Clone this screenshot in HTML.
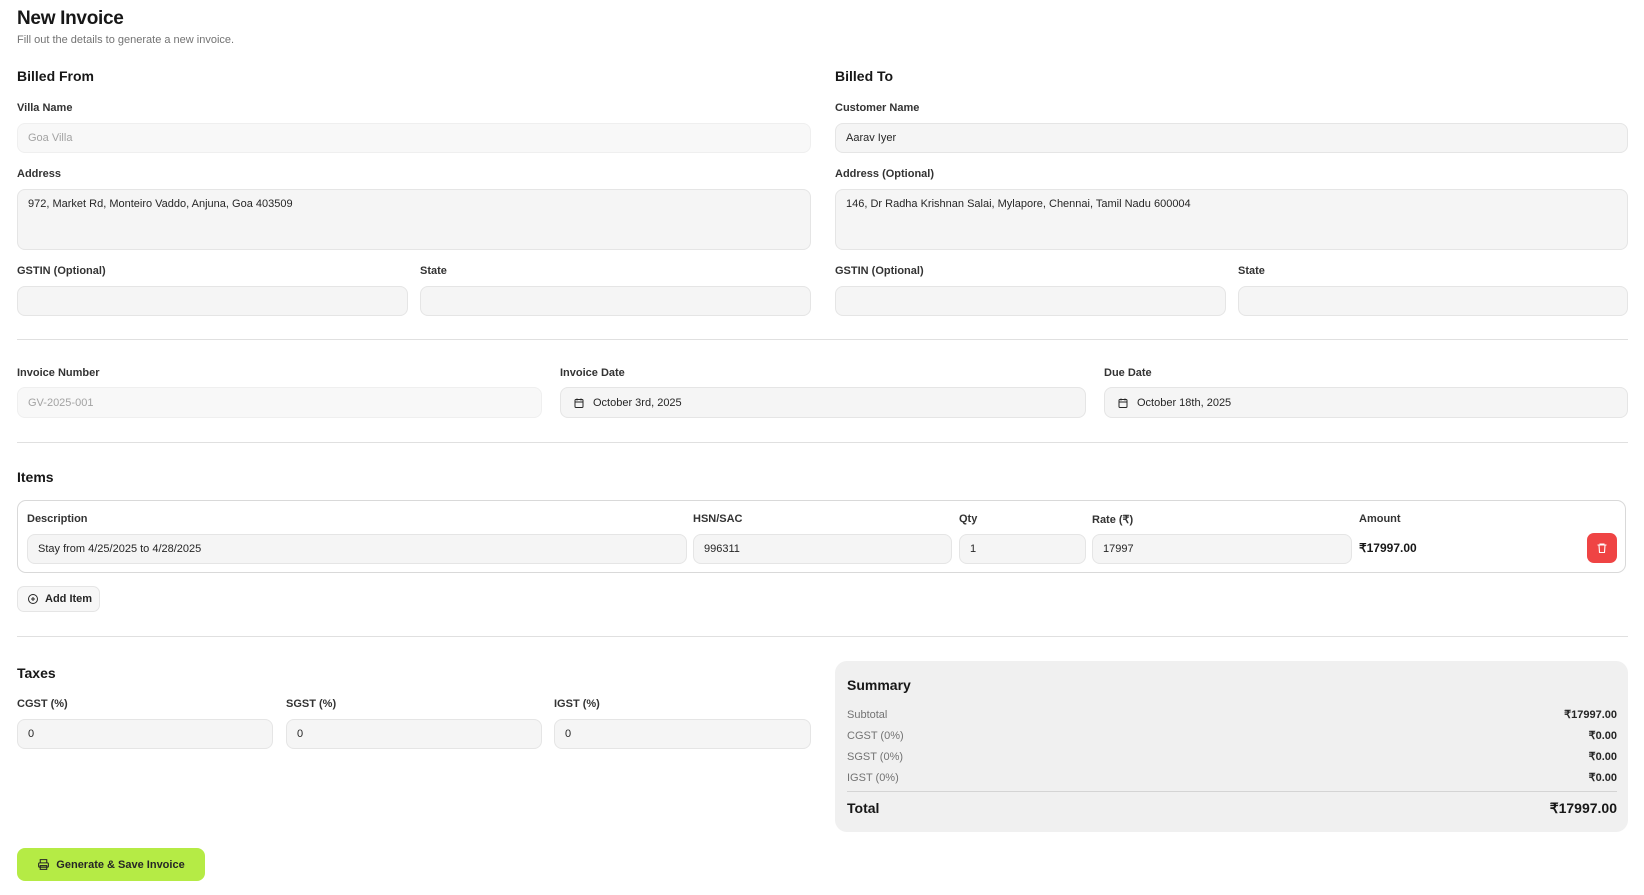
<!DOCTYPE html>
<html><head><meta charset="utf-8"><style>
*{box-sizing:border-box;margin:0;padding:0}
body{width:1644px;height:895px;background:#fff;font-family:"Liberation Sans",sans-serif;color:#171717;position:relative;overflow:hidden}
.a{position:absolute}
.h1{font-size:19px;font-weight:700;letter-spacing:-0.3px}
.sub{font-size:11px;color:#737373}
.h2{font-size:14px;font-weight:700}
.lbl{font-size:11px;font-weight:700;color:#333}
.in{position:absolute;background:#f5f5f5;border:1px solid #e5e5e5;border-radius:8px;font-size:11px;padding-left:10px;display:flex;align-items:center;color:#262626}
.ph{color:#a3a3a3;background:#f8f8f8;border-color:#efefef}
.ta{align-items:flex-start;padding-top:8px}
.hr{position:absolute;left:17px;width:1611px;height:1px;background:#e0e0e0}
.row{position:absolute;left:847px;width:770px;font-size:11px;color:#737373;display:flex;justify-content:space-between;align-items:baseline}
.row b{color:#262626;font-weight:700}
</style></head><body>
<div class="a h1" style="left:17px;top:8px">New Invoice</div>
<div class="a sub" style="left:17px;top:34px">Fill out the details to generate a new invoice.</div>

<div class="a h2" style="left:17px;top:68px">Billed From</div>
<div class="a h2" style="left:835px;top:68px">Billed To</div>

<div class="a lbl" style="left:17px;top:102px">Villa Name</div>
<div class="in ph" style="left:17px;top:123px;width:794px;height:30px">Goa Villa</div>
<div class="a lbl" style="left:835px;top:102px">Customer Name</div>
<div class="in" style="left:835px;top:123px;width:793px;height:30px">Aarav Iyer</div>

<div class="a lbl" style="left:17px;top:168px">Address</div>
<div class="in ta" style="left:17px;top:189px;width:794px;height:61px">972, Market Rd, Monteiro Vaddo, Anjuna, Goa 403509</div>
<div class="a lbl" style="left:835px;top:168px">Address (Optional)</div>
<div class="in ta" style="left:835px;top:189px;width:793px;height:61px">146, Dr Radha Krishnan Salai, Mylapore, Chennai, Tamil Nadu 600004</div>

<div class="a lbl" style="left:17px;top:265px">GSTIN (Optional)</div>
<div class="in" style="left:17px;top:286px;width:391px;height:30px"></div>
<div class="a lbl" style="left:420px;top:265px">State</div>
<div class="in" style="left:420px;top:286px;width:391px;height:30px"></div>
<div class="a lbl" style="left:835px;top:265px">GSTIN (Optional)</div>
<div class="in" style="left:835px;top:286px;width:391px;height:30px"></div>
<div class="a lbl" style="left:1238px;top:265px">State</div>
<div class="in" style="left:1238px;top:286px;width:390px;height:30px"></div>

<div class="hr" style="top:339px"></div>

<div class="a lbl" style="left:17px;top:367px">Invoice Number</div>
<div class="in ph" style="left:17px;top:387px;width:525px;height:31px">GV-2025-001</div>
<div class="a lbl" style="left:560px;top:367px">Invoice Date</div>
<div class="in" style="left:560px;top:387px;width:526px;height:31px;padding-left:12px"><svg width="12" height="12" viewBox="0 0 24 24" fill="none" stroke="#262626" stroke-width="2"><rect x="4" y="5" width="16" height="16" rx="2"/><path d="M8 3v4M16 3v4M4 10h16"/></svg><span style="margin-left:8px">October 3rd, 2025</span></div>
<div class="a lbl" style="left:1104px;top:367px">Due Date</div>
<div class="in" style="left:1104px;top:387px;width:524px;height:31px;padding-left:12px"><svg width="12" height="12" viewBox="0 0 24 24" fill="none" stroke="#262626" stroke-width="2"><rect x="4" y="5" width="16" height="16" rx="2"/><path d="M8 3v4M16 3v4M4 10h16"/></svg><span style="margin-left:8px">October 18th, 2025</span></div>

<div class="hr" style="top:442px"></div>

<div class="a h2" style="left:17px;top:469px">Items</div>
<div class="a" style="left:17px;top:500px;width:1609px;height:73px;border:1px solid #d9d9d9;border-radius:9px"></div>
<div class="a lbl" style="left:27px;top:513px">Description</div>
<div class="a lbl" style="left:693px;top:513px">HSN/SAC</div>
<div class="a lbl" style="left:959px;top:513px">Qty</div>
<div class="a lbl" style="left:1092px;top:513px">Rate (₹)</div>
<div class="a lbl" style="left:1359px;top:513px">Amount</div>
<div class="in" style="left:27px;top:534px;width:660px;height:30px">Stay from 4/25/2025 to 4/28/2025</div>
<div class="in" style="left:693px;top:534px;width:259px;height:30px">996311</div>
<div class="in" style="left:959px;top:534px;width:127px;height:30px">1</div>
<div class="in" style="left:1092px;top:534px;width:260px;height:30px">17997</div>
<div class="a" style="left:1359px;top:541px;font-size:12px;font-weight:700">₹17997.00</div>
<div class="a" style="left:1587px;top:533px;width:30px;height:30px;background:#ef4444;border-radius:7px;display:flex;align-items:center;justify-content:center"><svg width="12" height="12" viewBox="0 0 24 24" fill="none" stroke="#fff" stroke-width="2.2"><path d="M3 6h18M8 6V4h8v2M6 6l1 15h10l1-15"/></svg></div>

<div class="a" style="left:17px;top:586px;width:83px;height:26px;border:1px solid #e5e5e5;background:#f7f7f7;border-radius:7px;display:flex;align-items:center;padding-left:9px;font-size:11px;font-weight:700;color:#262626"><svg width="12" height="12" viewBox="0 0 24 24" fill="none" stroke="#262626" stroke-width="2"><circle cx="12" cy="12" r="9"/><path d="M12 8v8M8 12h8"/></svg><span style="margin-left:6px">Add Item</span></div>

<div class="hr" style="top:636px"></div>

<div class="a h2" style="left:17px;top:665px">Taxes</div>
<div class="a lbl" style="left:17px;top:698px">CGST (%)</div>
<div class="in" style="left:17px;top:719px;width:256px;height:30px">0</div>
<div class="a lbl" style="left:286px;top:698px">SGST (%)</div>
<div class="in" style="left:286px;top:719px;width:256px;height:30px">0</div>
<div class="a lbl" style="left:554px;top:698px">IGST (%)</div>
<div class="in" style="left:554px;top:719px;width:257px;height:30px">0</div>

<div class="a" style="left:835px;top:661px;width:793px;height:171px;background:#f0f0f0;border-radius:12px"></div>
<div class="a h2" style="left:847px;top:677px">Summary</div>
<div class="row" style="top:708px"><span>Subtotal</span><b>₹17997.00</b></div>
<div class="row" style="top:729px"><span>CGST (0%)</span><b>₹0.00</b></div>
<div class="row" style="top:750px"><span>SGST (0%)</span><b>₹0.00</b></div>
<div class="row" style="top:771px"><span>IGST (0%)</span><b>₹0.00</b></div>
<div class="a" style="left:847px;top:791px;width:770px;height:1px;background:#d4d4d4"></div>
<div class="row" style="top:800px;font-size:14px;color:#171717;font-weight:700"><span>Total</span><span>₹17997.00</span></div>

<div class="a" style="left:17px;top:848px;width:188px;height:33px;background:#b5eb45;border-radius:8px;display:flex;align-items:center;justify-content:center;font-size:11px;font-weight:700;color:#262626"><svg width="13" height="13" viewBox="0 0 24 24" fill="none" stroke="#262626" stroke-width="2"><path d="M6 9V3h12v6"/><rect x="3" y="9" width="18" height="8" rx="2"/><rect x="6" y="14" width="12" height="7"/></svg><span style="margin-left:6px">Generate &amp; Save Invoice</span></div>
</body></html>
